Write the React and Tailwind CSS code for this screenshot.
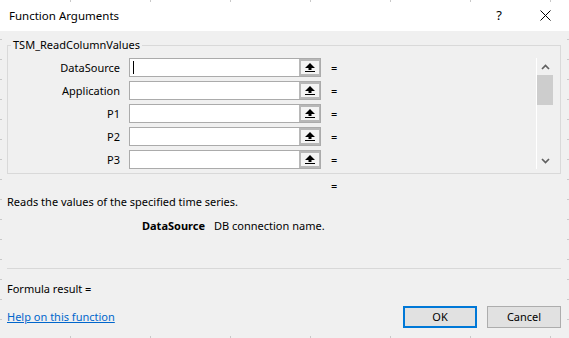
import React from "react";

const UpArrow = () => (
  <svg width="10" height="9" viewBox="0 0 10 9" shapeRendering="crispEdges">
    <path d="M5 0 L10 5 L6.5 5 L6.5 7 L3.5 7 L3.5 5 L0 5 Z" fill="#000" shapeRendering="auto" />
    <rect x="0" y="7.5" width="10" height="1.5" fill="#000" />
  </svg>
);

const Chevron = ({ down }) => (
  <svg width="9" height="6" viewBox="0 0 9 6">
    <polyline
      points={down ? "1,1 4.5,4.5 8,1" : "1,5 4.5,1.5 8,5"}
      fill="none"
      stroke="#606060"
      strokeWidth="1.7"
    />
  </svg>
);

const Ticks = () => {
  const lines = [];
  for (let y = 39; y < 338; y += 20) {
    lines.push(<rect key={"l" + y} x="0" y={y} width="2" height="1" />);
    lines.push(<rect key={"r" + y} x="567" y={y} width="2" height="1" />);
  }
  for (let x = 70; x < 569; x += 80) {
    lines.push(<rect key={"t" + x} x={x} y="0" width="1" height="2" />);
    lines.push(<rect key={"b" + x} x={x} y="336" width="1" height="2" />);
  }
  return (
    <svg
      className="absolute inset-0 pointer-events-none"
      width="569"
      height="338"
      fill="#c9c9c9"
    >
      {lines}
    </svg>
  );
};

const rows = ["DataSource", "Application", "P1", "P2", "P3"];

export default function App() {
  return (
    <div className="relative w-[569px] h-[338px] overflow-hidden bg-[#f0f0f0] text-black text-[11px] font-['Noto_Sans',sans-serif]">
      {/* Title bar */}
      <div className="h-[31px] bg-white flex items-center">
        <div className="pl-[9px] flex-1 text-[11.5px]">Function Arguments</div>
        <div className="w-[46px] h-full flex items-center justify-center text-[13px]">?</div>
        <div className="w-[46px] h-full flex items-center justify-center mr-[1px]">
          <svg width="11" height="11" viewBox="0 0 11 11">
            <path d="M0.5 0.5 L10.5 10.5 M10.5 0.5 L0.5 10.5" stroke="#000" strokeWidth="1" />
          </svg>
        </div>
      </div>

      <div className="pl-[7px] pr-[8px]">
        <fieldset className="mt-[7px] border border-[#d9d9d9] min-w-0">
          <legend className="ml-[3px] px-[2px] leading-[14px]">TSM_ReadColumnValues</legend>
          <div className="flex pt-[6px] pb-[4px]">
            <div className="flex-1 flex flex-col gap-[4px]">
              {rows.map((r, i) => (
                <div key={r} className="flex items-center h-[19px]">
                  <div className="w-[112px] text-right leading-[19px]">{r}</div>
                  <div className="ml-[9px] w-[192px] h-[19px] flex border border-[#ababab] bg-white">
                    <div className="flex-1 flex items-center">
                      {i === 0 && <div className="ml-[3px] w-px h-[13px] bg-black" />}
                    </div>
                    <div className="w-[21px] h-full pl-[2px] pr-[1px] py-[2px] bg-[#b8b8b8]">
                      <div className="w-full h-full bg-[#f4f4f4] flex items-center justify-center">
                        <UpArrow />
                      </div>
                    </div>
                  </div>
                  <div className="ml-[10px] leading-[19px]">=</div>
                </div>
              ))}
            </div>
            <div className="w-[17px] mr-[7px] border-l border-white flex flex-col items-center">
              <div className="h-[17px] flex items-center justify-center w-full">
                <Chevron />
              </div>
              <div className="w-full h-[30px] bg-[#cdcdcd]" />
              <div className="flex-1" />
              <div className="h-[17px] flex items-center justify-center w-full">
                <Chevron down />
              </div>
            </div>
          </div>
        </fieldset>

        <div className="mt-[5px] pl-[324px] leading-[14px]">=</div>
        <div className="mt-[2px] leading-[14px]">Reads the values of the specified time series.</div>
        <div className="mt-[10px] flex leading-[14px]">
          <div className="w-[198px] text-right font-bold">DataSource</div>
          <div className="ml-[9px]">DB connection name.</div>
        </div>

        <div className="mt-[35px] h-px bg-[#d8d8d8]" />

        <div className="mt-[13px] leading-[14px]">Formula result =</div>

        <div className="mt-[10px] flex items-center">
          <a className="flex-1 text-[#0066cc] underline leading-[14px]" href="#">
            Help on this function
          </a>
          <div className="w-[74px] h-[22px] border-2 border-[#0078d7] bg-[#e1e1e1] flex items-center justify-center">
            OK
          </div>
          <div className="ml-[10px] w-[74px] h-[22px] border border-[#adadad] bg-[#e1e1e1] flex items-center justify-center">
            Cancel
          </div>
        </div>
      </div>

      <Ticks />
    </div>
  );
}
